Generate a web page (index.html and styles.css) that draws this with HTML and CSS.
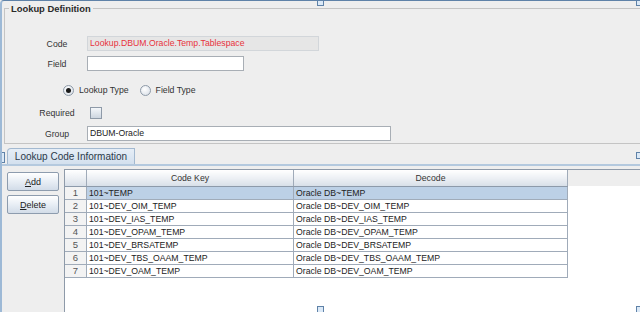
FILE: index.html
```html
<!DOCTYPE html>
<html lang="en">
  <head>
    <meta charset="UTF-8" />
    <meta name="viewport" content="width=device-width, initial-scale=1.0" />
    <title>Lookup Definition</title>
    <link rel="stylesheet" href="styles.css">
  </head>
  <body>
    <main class="designer">
      <fieldset class="lookup-def">
        <legend>Lookup Definition</legend>
        <div class="form-row row-code">
          <span class="lbl">Code</span>
          <div class="code-field">Lookup.DBUM.Oracle.Temp.Tablespace</div>
        </div>
        <div class="form-row row-field">
          <span class="lbl">Field</span>
          <div class="text-field field-input"></div>
        </div>
        <div class="radio-row">
          <span class="radio checked"></span><span class="radio-text">Lookup Type</span>
          <span class="radio"></span><span class="radio-text">Field Type</span>
        </div>
        <div class="form-row row-required">
          <span class="lbl">Required</span>
          <span class="checkbox"></span>
        </div>
        <div class="form-row row-group">
          <span class="lbl">Group</span>
          <div class="text-field group-input">DBUM-Oracle</div>
        </div>
      </fieldset>

      <div class="tab-strip">
        <div class="tab">Lookup Code Information</div>
      </div>

      <div class="tab-body">
        <div class="actions">
          <button class="btn"><u>A</u>dd</button>
          <button class="btn"><u>D</u>elete</button>
        </div>
        <div class="table-wrap">
          <table class="codes">
            <thead>
              <tr><th class="num"></th><th class="key">Code Key</th><th class="dec">Decode</th></tr>
            </thead>
            <tbody>
              <tr class="selected"><td class="num">1</td><td>101~TEMP</td><td>Oracle DB~TEMP</td></tr>
              <tr><td class="num">2</td><td>101~DEV_OIM_TEMP</td><td>Oracle DB~DEV_OIM_TEMP</td></tr>
              <tr><td class="num">3</td><td>101~DEV_IAS_TEMP</td><td>Oracle DB~DEV_IAS_TEMP</td></tr>
              <tr><td class="num">4</td><td>101~DEV_OPAM_TEMP</td><td>Oracle DB~DEV_OPAM_TEMP</td></tr>
              <tr><td class="num">5</td><td>101~DEV_BRSATEMP</td><td>Oracle DB~DEV_BRSATEMP</td></tr>
              <tr><td class="num">6</td><td>101~DEV_TBS_OAAM_TEMP</td><td>Oracle DB~DEV_TBS_OAAM_TEMP</td></tr>
              <tr><td class="num">7</td><td>101~DEV_OAM_TEMP</td><td>Oracle DB~DEV_OAM_TEMP</td></tr>
            </tbody>
          </table>
        </div>
      </div>

      <!-- designer selection handles -->
      <span class="handle h-tm"></span>
      <span class="handle h-tr"></span>
      <span class="handle h-ml"></span>
      <span class="handle h-mr"></span>
      <span class="handle h-bm"></span>
      <span class="handle h-br"></span>
    </main>
  </body>
</html>
```

FILE: styles.css
```css
body {
  margin: 0;
  padding: 0;
  background: #eeeeee;
  font-family: "Liberation Sans", Arial, sans-serif;
  font-size: 8.7px;
  color: #222;
  overflow: hidden;
}
.designer {
  position: relative;
  width: 640px;
  height: 312px;
  box-sizing: border-box;
  border-top: 1px solid #5f82a8;
  border-left: 2px solid #9db9d6;
  border-top-left-radius: 4px;
  overflow: hidden;
}

/* top panel */
.lookup-def {
  margin: 2px 0 0 2px;
  padding: 0 0 2px 0;
  border: 1px solid #c4c4c4;
  border-right: none;
}
.lookup-def legend {
  margin-left: 4px;
  padding: 0 2px;
  font-size: 9.4px;
  font-weight: bold;
  line-height: 11px;
  color: #2a2a2a;
}
.form-row {
  display: flex;
  align-items: center;
}
.lbl {
  width: 38px;
  margin-left: 33px;
  margin-right: 11px;
  text-align: center;
  color: #333;
}
.row-code { margin-top: 22px; }
.row-field { margin-top: 5px; }
.row-required { margin-top: 11px; }
.row-group { margin-top: 7px; }
.code-field {
  width: 228px;
  height: 13px;
  line-height: 13px;
  padding-left: 2px;
  background: #e6e6e6;
  border: 1px solid #d2d6da;
  color: #e8323c;
}
.text-field {
  height: 13px;
  line-height: 13px;
  padding-left: 2px;
  background: #fff;
  border: 1px solid #a8aeb5;
  color: #222;
}
.field-input { width: 153px; }
.group-input { width: 300px; }
.radio-row {
  display: flex;
  align-items: center;
  margin-top: 13px;
  padding-left: 58px;
  height: 12px;
}
.radio {
  width: 9px;
  height: 9px;
  border-radius: 50%;
  border: 1px solid #8e9aa8;
  background: radial-gradient(circle at 40% 35%, #ffffff, #d4dbe4);
  margin-right: 5px;
  position: relative;
}
.radio.checked::after {
  content: "";
  position: absolute;
  left: 2px;
  top: 2px;
  width: 5px;
  height: 5px;
  border-radius: 50%;
  background: #1a1a1a;
}
.radio-text { margin-right: 11px; color: #333; }
.checkbox {
  width: 10px;
  height: 10px;
  margin-left: 3px;
  border: 1px solid #8e9aa8;
  background: linear-gradient(#f4f7fa, #cdd6e0);
}

/* tabbed panel */
.tab-strip {
  margin-top: 3px;
  height: 17px;
  display: flex;
  align-items: flex-end;
  border-bottom: 2px solid #b4c9de;
}
.tab {
  margin-left: 5px;
  width: 128px;
  height: 16px;
  line-height: 16px;
  box-sizing: border-box;
  text-align: center;
  font-size: 10px;
  color: #2b3a4a;
  background: linear-gradient(#e6eef7, #d3e0ee);
  border: 1px solid #a3b9d0;
  border-bottom: none;
  border-top-left-radius: 4px;
}
.tab-body {
  display: flex;
  align-items: flex-start;
  padding-top: 3px;
}
.actions {
  display: flex;
  flex-direction: column;
  gap: 4px;
  padding: 3px 0 0 5px;
  width: 52px;
}
.btn {
  width: 52px;
  height: 19px;
  padding: 0;
  font-family: inherit;
  font-size: 9px;
  color: #222;
  border: 1px solid #8d9cae;
  border-radius: 2px;
  background: linear-gradient(#ffffff, #e8eef5 50%, #d2dce8);
}
.table-wrap {
  margin-left: 5px;
  flex: 1;
  height: 150px;
  border-left: 1px solid #8e9aa9;
  border-top: 1px solid #8e9aa9;
  background: linear-gradient(#eeeeee 0 16px, #ffffff 16px);
}
.codes {
  border-collapse: collapse;
  table-layout: fixed;
  width: 503px;
}
.codes th {
  height: 16px;
  padding: 0;
  font-weight: normal;
  color: #333;
  background: linear-gradient(#ffffff, #e9edf2 60%, #d8dfe8);
  border-right: 1px solid #a0abb9;
  border-bottom: 1px solid #8d9aaa;
}
.codes th.num { width: 21px; }
.codes th.key { width: 206px; }
.codes td {
  height: 12px;
  padding: 0 0 0 2px;
  line-height: 12px;
  white-space: nowrap;
  border-right: 1px solid #a0abb9;
  border-bottom: 1px solid #a0abb9;
}
.codes td.num {
  text-align: center;
  padding: 0;
  color: #555;
  background: #f3f3f3;
  font-size: 9.5px;
}
.codes tr.selected td { background: #bcd0e6; }
.codes tr.selected td.num { background: #f3f3f3; }

/* selection handles */
.handle {
  position: absolute;
  width: 5px;
  height: 5px;
  border: 1px solid #5f82a8;
  background: #dbe9f7;
}
.h-tm { left: 315px; top: -2px; }
.h-tr { left: 634px; top: -2px; }
.h-ml { left: -4px; top: 151px; height: 9px; }
.h-mr { left: 634px; top: 151px; }
.h-bm { left: 315px; top: 305px; }
.h-br { left: 634px; top: 305px; }
```
